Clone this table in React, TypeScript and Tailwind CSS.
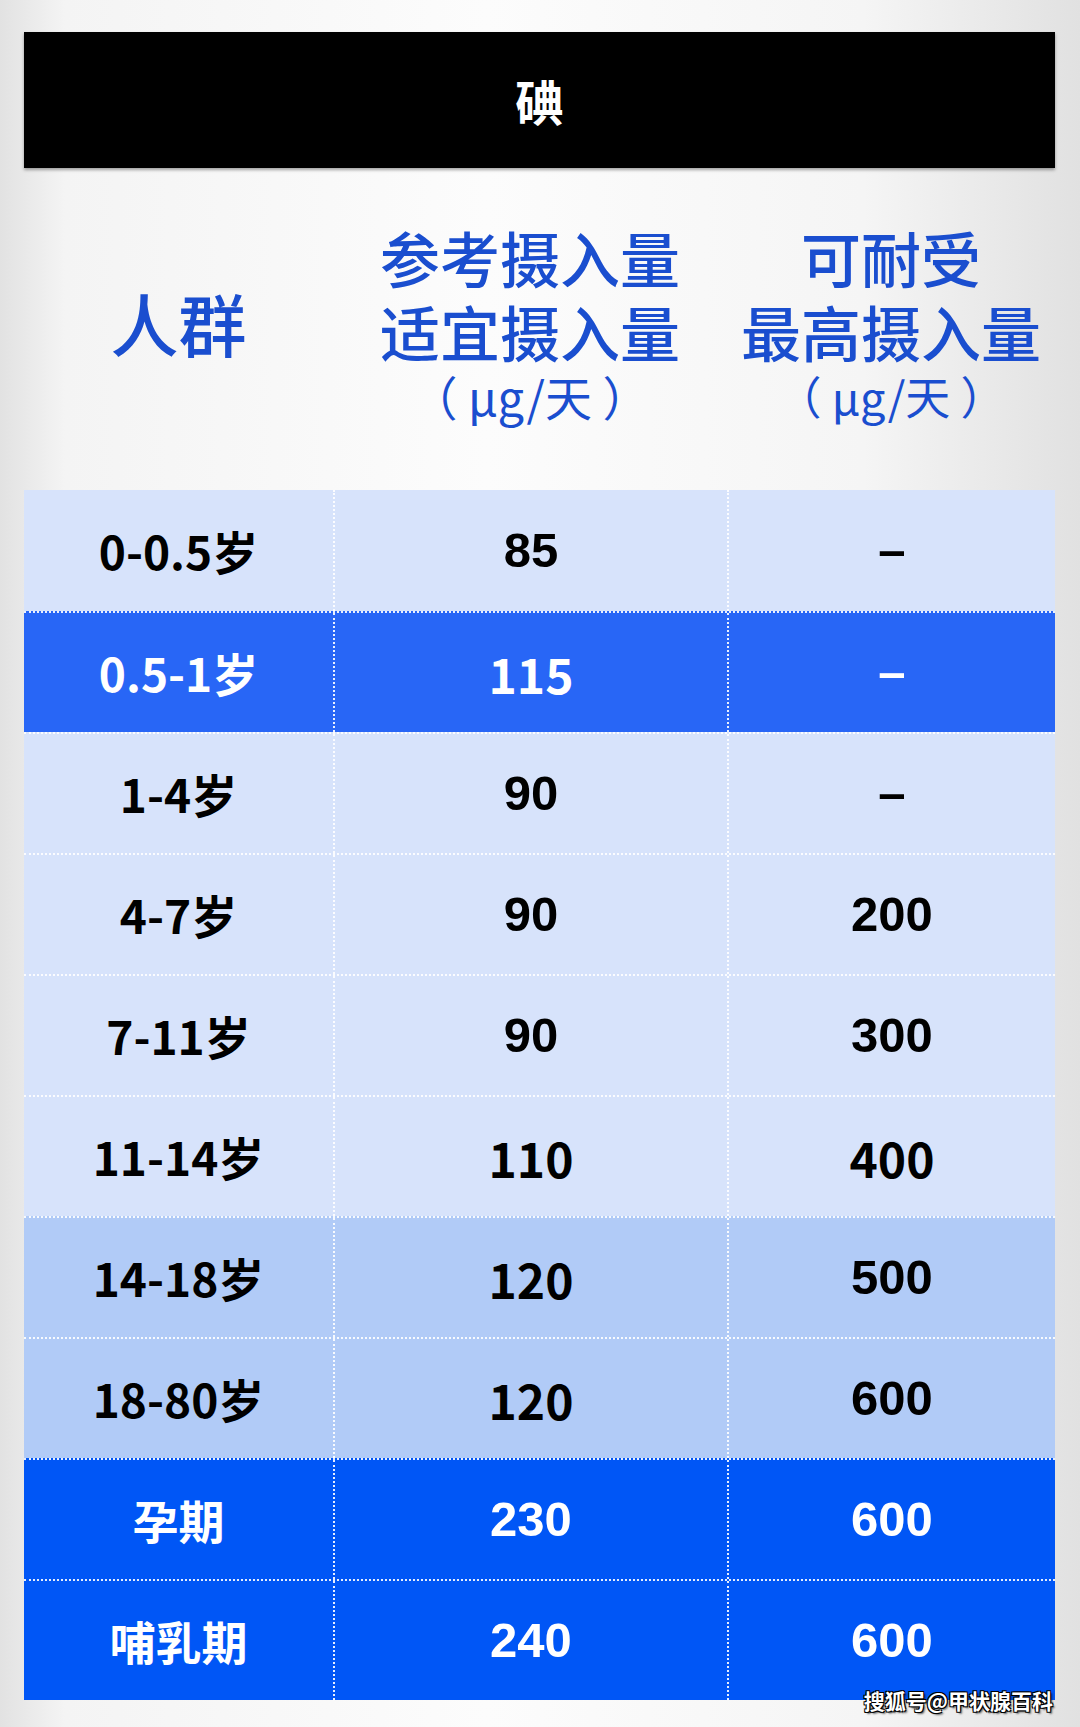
import React from 'react';

type Cell = { text: string; rounded?: boolean };

interface RowData {
  group: string;
  ref: Cell;
  max: Cell;
  tone: 'light' | 'mid' | 'soft' | 'deep';
}

const rows: RowData[] = [
  { group: '0-0.5岁', ref: { text: '85' }, max: { text: '–' }, tone: 'light' },
  { group: '0.5-1岁', ref: { text: '115', rounded: true }, max: { text: '–' }, tone: 'mid' },
  { group: '1-4岁', ref: { text: '90' }, max: { text: '–' }, tone: 'light' },
  { group: '4-7岁', ref: { text: '90' }, max: { text: '200' }, tone: 'light' },
  { group: '7-11岁', ref: { text: '90' }, max: { text: '300' }, tone: 'light' },
  { group: '11-14岁', ref: { text: '110', rounded: true }, max: { text: '400', rounded: true }, tone: 'light' },
  { group: '14-18岁', ref: { text: '120', rounded: true }, max: { text: '500' }, tone: 'soft' },
  { group: '18-80岁', ref: { text: '120', rounded: true }, max: { text: '600' }, tone: 'soft' },
  { group: '孕期', ref: { text: '230' }, max: { text: '600' }, tone: 'deep' },
  { group: '哺乳期', ref: { text: '240' }, max: { text: '600' }, tone: 'deep' },
];

const toneBg: Record<RowData['tone'], string> = {
  light: 'bg-[#d7e3fb] text-black',
  mid: 'bg-[#2866f6] text-white',
  soft: 'bg-[#b1cbf7] text-black',
  deep: 'bg-[#0056f6] text-white',
};

const cjk = "font-['Noto_Sans_CJK_SC',sans-serif]";
const num = "font-['Liberation_Sans','Noto_Sans_CJK_SC',sans-serif]";

function NumCell({ cell }: { cell: Cell }) {
  return (
    <span className={cell.rounded ? `${cjk} text-[48px] font-bold` : `${num} text-[49px] font-bold`}>
      {cell.text}
    </span>
  );
}

export default function App() {
  return (
    <div className="relative w-[1080px] h-[1727px] overflow-hidden bg-[linear-gradient(90deg,#e2e2e2_0%,#f4f4f4_6%,#fcfcfc_45%,#f5f5f5_80%,#e1e1e1_100%)] pt-[32px] pl-[24px] pr-[25px]">
      {/* 標題 */}
      <div className="h-[136px] bg-black flex items-center justify-center shadow-[0_2px_3px_rgba(0,0,0,0.35)]">
        <span className={`${cjk} text-[48px] font-bold text-white leading-none`}>碘</span>
      </div>

      {/* 表頭 */}
      <div className={`grid grid-cols-[309px_394px_328px] h-[322px] text-[#1a4ecf] font-medium ${cjk}`}>
        <div className="flex justify-center pt-[115px]">
          <span className="text-[68px] leading-[80px]">人群</span>
        </div>
        <div className="flex flex-col items-center pt-[52px] text-center">
          <div className="text-[60px] leading-[74px]">
            参考摄入量
            <br />
            适宜摄入量
          </div>
          <div className="text-[47px] leading-[56px] font-normal">（ μg/天 ）</div>
        </div>
        <div className="flex flex-col items-center pt-[52px] text-center">
          <div className="text-[60px] leading-[74px]">
            可耐受
            <br />
            最高摄入量
          </div>
          <div className="text-[45px] leading-[56px] font-normal">（ μg/天 ）</div>
        </div>
      </div>

      {/* 表格 */}
      <div className="flex flex-col">
        {rows.map((row, i) => (
          <div
            key={i}
            className={`grid grid-cols-[309px_394px_328px] h-[121px] ${toneBg[row.tone]} ${i > 0 ? 'border-t-2 border-dotted border-white/90' : ''}`}
          >
            <div className="flex items-center justify-center">
              <span className={`${cjk} text-[46px] font-bold`}>{row.group}</span>
            </div>
            <div className="flex items-center justify-center border-l-2 border-dotted border-white/90">
              <NumCell cell={row.ref} />
            </div>
            <div className="flex items-center justify-center border-l-2 border-dotted border-white/90">
              <NumCell cell={row.max} />
            </div>
          </div>
        ))}
      </div>

      {/* 水印 */}
      <div
        className={`absolute right-[27px] top-[1690px] ${cjk} text-[21px] font-bold text-white leading-none [text-shadow:1px_1px_0_#000,-1px_-1px_0_#000,1px_-1px_0_#000,-1px_1px_0_#000,2px_2px_2px_rgba(0,0,0,0.6)]`}
      >
        搜狐号@甲状腺百科
      </div>
    </div>
  );
}
